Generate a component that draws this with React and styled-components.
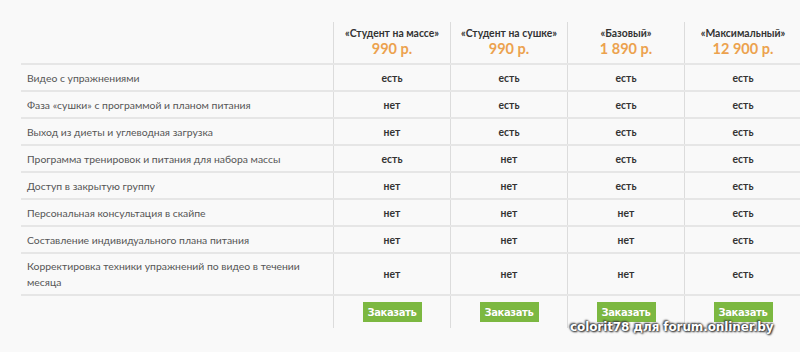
import React from "react";
import styled, { createGlobalStyle } from "styled-components";

const GlobalStyle = createGlobalStyle`
  html, body {
    margin: 0;
    padding: 0;
    background: #f9f9f9;
    overflow: hidden;
  }
  body {
    font-family: Lato, "Open Sans", sans-serif;
  }
`;

const Page = styled.div`
  position: relative;
  width: 800px;
  height: 352px;
  padding: 22px 0 0 21px;
  box-sizing: border-box;
`;

const Row = styled.div`
  display: grid;
  grid-template-columns: 312px repeat(4, 117px);
  width: 780px;
  height: ${({ $h }) => $h}px;
  box-sizing: border-box;
  border-bottom: ${({ $last }) => ($last ? "none" : "2px solid #e6e6e6")};
`;

const Label = styled.div`
  display: flex;
  align-items: center;
  padding: 0 28px 0 6px;
  font-size: 10.4px;
  line-height: 16px;
  color: #555;
`;

const Cell = styled.div`
  display: flex;
  flex-direction: column;
  align-items: center;
  justify-content: center;
  border-left: 1px solid #dcdcdc;
  font-size: 10.4px;
  font-weight: 700;
  color: #333;
`;

const PlanName = styled.div`
  font-size: 10.4px;
  font-weight: 700;
  color: #333;
  line-height: 14px;
  margin-top: 2px;
`;

const Price = styled.div`
  font-size: 14.5px;
  font-weight: 700;
  color: #eca24e;
  line-height: 17px;
  margin-bottom: 4px;
`;

const OrderButton = styled.button`
  width: 59px;
  height: 20px;
  padding: 0;
  border: none;
  background: #7cb841;
  color: #fff;
  font-family: "DejaVu Sans", sans-serif;
  font-size: 10px;
  font-weight: 700;
  letter-spacing: -0.4px;
  text-shadow: 0 0 1px rgba(0, 0, 0, 0.15);
  cursor: pointer;
`;

const Watermark = styled.div`
  position: absolute;
  left: 570px;
  top: 320px;
  font-family: "DejaVu Sans", sans-serif;
  font-size: 12px;
  font-weight: 700;
  color: #fff;
  letter-spacing: -0.1px;
  text-shadow: 0 0 2px #222, 1px 1px 2px #222, -1px -1px 2px #444;
  white-space: nowrap;
`;

const plans = [
  { name: "«Студент на массе»", price: "990 р." },
  { name: "«Студент на сушке»", price: "990 р." },
  { name: "«Базовый»", price: "1 890 р." },
  { name: "«Максимальный»", price: "12 900 р." },
];

const features = [
  ["Видео с упражнениями", [1, 1, 1, 1]],
  ["Фаза «сушки» с программой и планом питания", [0, 1, 1, 1]],
  ["Выход из диеты и углеводная загрузка", [0, 1, 1, 1]],
  ["Программа тренировок и питания для набора массы", [1, 0, 1, 1]],
  ["Доступ в закрытую группу", [0, 0, 1, 1]],
  ["Персональная консультация в скайпе", [0, 0, 0, 1]],
  ["Составление индивидуального плана питания", [0, 0, 0, 1]],
  ["Корректировка техники упражнений по видео в течении месяца", [0, 0, 0, 1]],
];

const App = () => (
  <>
    <GlobalStyle />
    <Page>
      <Row $h={43}>
        <Label />
        {plans.map((p) => (
          <Cell key={p.name}>
            <PlanName>{p.name}</PlanName>
            <Price>{p.price}</Price>
          </Cell>
        ))}
      </Row>
      {features.map(([title, marks], i) => (
        <Row key={title} $h={i === features.length - 1 ? 42 : 27}>
          <Label>{title}</Label>
          {marks.map((m, j) => (
            <Cell key={j}>{m ? "есть" : "нет"}</Cell>
          ))}
        </Row>
      ))}
      <Row $h={32} $last>
        <Label />
        {plans.map((p) => (
          <Cell key={p.name}>
            <OrderButton>Заказать</OrderButton>
          </Cell>
        ))}
      </Row>
      <Watermark>colorit78 для forum.onliner.by</Watermark>
    </Page>
  </>
);

export default App;
